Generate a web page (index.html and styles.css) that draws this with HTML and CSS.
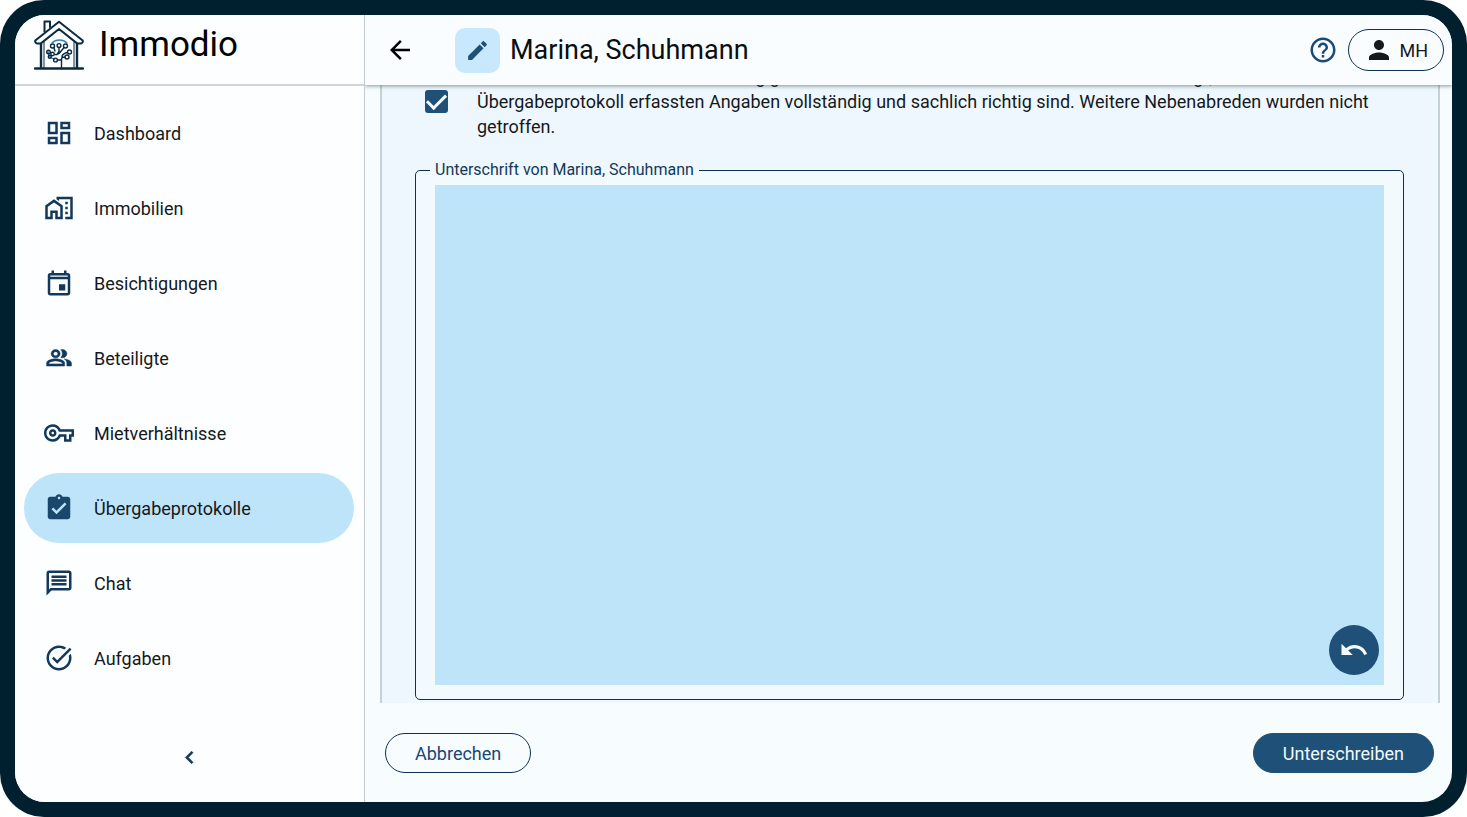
FILE: index.html
```html
<!DOCTYPE html>
<html lang="de">
<head>
<meta charset="utf-8">
<meta name="viewport" content="width=device-width, initial-scale=1">
<title>Immodio – Übergabeprotokolle</title>
<link rel="stylesheet" href="styles.css">
</head>
<body>
<div class="frame">
  <div class="app">
    <aside class="sidebar">
      <div class="brand">
        <svg class="logo" viewBox="0 0 50 50" fill="none" stroke="#0b2a40" stroke-width="2" stroke-linejoin="round" stroke-linecap="round" aria-hidden="true">
          <path d="M10.500 11.500V1.500h5.500v5.500" />
          <path d="M25 1.800 1.600 20.200c-1 1-.2 3 1.400 3.200l3.600.2L25 9l18.400 14.600 3.600-.2c1.600-.2 2.400-2.200 1.400-3.200z"/>
          <path d="M7 24v24M43 24v24M1 48.500h48" stroke-width="2.400"/>
          <path d="M10 22v26M40 22v26" stroke-width="1"/>
          <g stroke-width="1.400">
            <path d="M18 23c4-4 11-4 15 0" stroke="#3f80b0"/>
            <path d="M14 31c0 5 3 8 7 8" stroke="#3f80b0"/>
            <circle cx="18.500" cy="26" r="2"/><circle cx="25" cy="25.500" r="1.900"/><circle cx="31.500" cy="26" r="2"/>
            <circle cx="14.500" cy="32" r="1.800"/><circle cx="18.500" cy="34" r="1.700"/><circle cx="15.800" cy="36.800" r="1.500"/>
            <circle cx="35.500" cy="32" r="2"/><circle cx="33" cy="37" r="2"/><circle cx="21.500" cy="40" r="1.900"/>
            <path d="M27.500 48v-9c0-2 2-2 3.800-2M28 37c0-3 3-4 5.500-4.500M23.500 40h4M25 27.500v4l-2 3M30 27.500l-4 5c-1 2-3 2-5 2M20 28l1 3"/>
          </g>
        </svg>
        <span class="brand-name">Immodio</span>
      </div>
      <nav class="nav" aria-label="Hauptnavigation">
        <a class="nav-item" href="#dashboard"><svg class="icon" viewBox="0 0 24 24"><path d="M19 5v2h-4V5h4M9 5v6H5V5h4m10 8v6h-4v-6h4M9 17v2H5v-2h4M21 3h-8v6h8V3zM11 3H3v10h8V3zm10 8h-8v10h8V11zm-10 4H3v6h8v-6z"/></svg>Dashboard</a>
        <a class="nav-item" href="#immobilien"><svg class="icon" viewBox="0 0 24 24"><path d="M17 11h2v2h-2zM17 7h2v2h-2zM17 15h2v2h-2zM10 3v1.970l2 1.430V5h9v14h-4v2h6V3H10zM8 5 1 10v11h6v-5h2v5h6V10L8 5zm5 14h-2v-5H5v5H3v-8l5-3.500 5 3.500v8z"/></svg>Immobilien</a>
        <a class="nav-item" href="#besichtigungen"><svg class="icon" viewBox="0 0 24 24"><path d="M19 4h-1V2h-2v2H8V2H6v2H5c-1.110 0-1.990.9-1.990 2L3 20c0 1.100.89 2 2 2h14c1.100 0 2-.9 2-2V6c0-1.100-.9-2-2-2zm0 16H5V9h14v11zm0-13H5V6h14v1zm-7 6h5v5h-5z"/></svg>Besichtigungen</a>
        <a class="nav-item" href="#beteiligte"><svg class="icon" viewBox="0 0 24 24"><path stroke="currentColor" stroke-width=".5" d="M16.670 13.130C18.040 14.060 19 15.320 19 17v3h4v-3c0-2.180-3.570-3.470-6.330-3.870zM15 12c2.210 0 4-1.790 4-4s-1.790-4-4-4c-.47 0-.91.1-1.330.24C14.500 5.270 15 6.580 15 8s-.5 2.730-1.330 3.760c.42.14.86.24 1.330.24zM9 12c2.210 0 4-1.790 4-4s-1.790-4-4-4-4 1.790-4 4 1.790 4 4 4zm0-6c1.100 0 2 .9 2 2s-.9 2-2 2-2-.9-2-2 .9-2 2-2zM9 13c-2.670 0-8 1.340-8 4v3h16v-3c0-2.660-5.330-4-8-4zm6 5H3v-.99C3.200 16.290 6.300 15 9 15s5.800 1.290 6 2v1z" transform="translate(1.200 2) scale(.9 .82)"/></svg>Beteiligte</a>
        <a class="nav-item" href="#mietverhaeltnisse"><svg class="icon" viewBox="0 0 24 24"><path d="M22 19h-6v-4h-2.680c-1.140 2.420-3.600 4-6.320 4-3.860 0-7-3.140-7-7s3.140-7 7-7c2.720 0 5.170 1.580 6.320 4H24v6h-2v4zm-4-2h2v-4h2v-2H11.940l-.23-.67C11.010 8.340 9.110 7 7 7c-2.760 0-5 2.240-5 5s2.240 5 5 5c2.110 0 4.010-1.340 4.710-3.330l.23-.67H18v4zM7 15c-1.650 0-3-1.350-3-3s1.350-3 3-3 3 1.350 3 3-1.350 3-3 3zm0-4c-.55 0-1 .45-1 1s.45 1 1 1 1-.45 1-1-.45-1-1-1z"/></svg>Mietverhältnisse</a>
        <a class="nav-item active" href="#uebergabeprotokolle" aria-current="page"><svg class="icon" viewBox="0 0 24 24"><path d="M19 3h-4.180C14.400 1.840 13.300 1 12 1s-2.400.84-2.820 2H5c-1.100 0-2 .9-2 2v14c0 1.100.9 2 2 2h14c1.100 0 2-.9 2-2V5c0-1.100-.9-2-2-2zm-7 0c.55 0 1 .45 1 1s-.45 1-1 1-1-.45-1-1 .45-1 1-1zm-2 14-4-4 1.410-1.410L10 14.170l6.590-6.590L18 9l-8 8z"/></svg>Übergabeprotokolle</a>
        <a class="nav-item" href="#chat"><svg class="icon" viewBox="0 0 24 24"><path d="M4 4h16v12H5.170L4 17.170V4m0-2c-1.100 0-1.990.9-1.990 2L2 22l4-4h14c1.100 0 2-.9 2-2V4c0-1.100-.9-2-2-2H4zm2 10h12v2H6v-2zm0-3h12v2H6V9zm0-3h12v2H6V6z"/></svg>Chat</a>
        <a class="nav-item" href="#aufgaben"><svg class="icon" viewBox="0 0 24 24"><path d="M22 5.180 10.590 16.600l-4.240-4.240 1.410-1.410 2.830 2.830 10-10L22 5.180zm-2.210 5.040c.13.570.21 1.170.21 1.780 0 4.420-3.580 8-8 8s-8-3.580-8-8 3.580-8 8-8c1.580 0 3.040.46 4.280 1.250l1.440-1.440C16.100 2.670 14.130 2 12 2 6.480 2 2 6.480 2 12s4.480 10 10 10 10-4.480 10-10c0-1.190-.22-2.330-.6-3.390l-1.610 1.610z"/></svg>Aufgaben</a>
      </nav>
      <button class="collapse" type="button" aria-label="Navigation einklappen"><svg class="icon-small" viewBox="0 0 24 24"><path stroke="currentColor" stroke-width=".6" d="M15.410 7.410 14 6l-6 6 6 6 1.410-1.410L10.830 12z"/></svg></button>
    </aside>

    <main class="main">
      <header class="topbar">
        <button class="back" type="button" aria-label="Zurück"><svg class="icon" viewBox="0 0 24 24"><path d="M20 11H7.830l5.590-5.590L12 4l-8 8 8 8 1.410-1.410L7.830 13H20v-2z"/></svg></button>
        <span class="badge"><svg class="icon-small" viewBox="0 0 24 24"><path d="M3 17.250V21h3.750L17.810 9.940l-3.750-3.750L3 17.250zM20.710 7.040c.39-.39.39-1.020 0-1.410l-2.340-2.340c-.39-.39-1.020-.39-1.410 0l-1.830 1.830 3.750 3.750 1.830-1.830z"/></svg></span>
        <h1 class="title">Marina, Schuhmann</h1>
        <button class="help" type="button" aria-label="Hilfe"><svg class="icon" viewBox="0 0 24 24"><path d="M11 18h2v-2h-2v2zm1-16C6.480 2 2 6.480 2 12s4.480 10 10 10 10-4.480 10-10S17.520 2 12 2zm0 18c-4.410 0-8-3.590-8-8s3.590-8 8-8 8 3.590 8 8-3.590 8-8 8zm0-14c-2.210 0-4 1.790-4 4h2c0-1.100.9-2 2-2s2 .9 2 2c0 2-3 1.750-3 5h2c0-2.250 3-2.500 3-5 0-2.210-1.790-4-4-4z"/></svg></button>
        <button class="account" type="button"><svg class="icon" viewBox="0 0 24 24"><path d="M12 12c2.210 0 4-1.790 4-4s-1.790-4-4-4-4 1.790-4 4 1.790 4 4 4zm0 2c-2.670 0-8 1.340-8 4v2h16v-2c0-2.660-5.330-4-8-4z"/></svg>MH</button>
      </header>

      <div class="scroller">
        <section class="panel">
          <div class="consent">
            <input class="check" type="checkbox" id="consent" checked>
            <label for="consent">Durch unsere Unterschrift unabhängig voneinander wird durch beide Seiten hiermit bestätigt, dass die im Übergabeprotokoll erfassten Angaben vollständig und sachlich richtig sind. Weitere Nebenabreden wurden nicht getroffen.</label>
          </div>
          <fieldset class="signature">
            <legend>Unterschrift von Marina, Schuhmann</legend>
            <div class="pad">
              <button class="undo" type="button" aria-label="Rückgängig"><svg class="icon" viewBox="0 0 24 24"><path d="M12.500 8c-2.650 0-5.050.99-6.900 2.600L2 7v9h9l-3.620-3.620c1.390-1.160 3.160-1.880 5.120-1.880 3.540 0 6.550 2.310 7.600 5.500l2.370-.78C21.080 11.030 17.150 8 12.500 8z"/></svg></button>
            </div>
          </fieldset>
        </section>
      </div>

      <footer class="actions">
        <button class="btn outline" type="button">Abbrechen</button>
        <button class="btn filled" type="button">Unterschreiben</button>
      </footer>
    </main>
  </div>
</div>
</body>
</html>
```
FILE: styles.css
```css
:root {
  --navy: #12395b;
  --blue: #1f5078;
  --line: #102f52;
  --sky: #bee4fa;
  --ink: #15191c;
}
* { box-sizing: border-box; }
body {
  margin: 0;
  background: #fff;
  color: var(--ink);
  font-family: Roboto, "Liberation Sans", sans-serif;
  font-size: 18px;
  line-height: 25px;
}
button {
  margin: 0;
  padding: 0;
  border: 0;
  background: none;
  color: inherit;
  font: inherit;
  cursor: pointer;
}
svg { display: block; flex: none; }
.icon { width: 30px; height: 30px; fill: currentColor; }
.icon-small { width: 25px; height: 25px; fill: currentColor; }

.frame {
  display: flex;
  height: 100vh;
  padding: 15px;
  background: #00202f;
  border-radius: 44px;
}
.app {
  display: flex;
  flex: 1;
  min-width: 0;
  overflow: hidden;
  background: #f7fcff;
  border-radius: 30px;
}

.sidebar {
  display: flex;
  flex-direction: column;
  flex: none;
  width: 350px;
  background: #fcfeff;
  border-right: 1px solid #c3c9cd;
}
.brand {
  display: flex;
  align-items: center;
  gap: 15px;
  height: 71px;
  padding: 0 19px 9px;
  border-bottom: 2px solid #cfd5da;
}
.logo { width: 50px; height: 50px; }
.brand-name { color: #000; font-size: 35px; line-height: 40px; }
.nav {
  display: flex;
  flex-direction: column;
  gap: 5px;
  padding: 12px 10px 0 9px;
}
.nav-item {
  display: flex;
  align-items: center;
  gap: 20px;
  height: 70px;
  padding: 0 20px;
  border-radius: 35px;
  color: var(--ink);
  text-decoration: none;
}
.nav-item .icon { color: var(--navy); }
.nav-item.active { background: var(--sky); }
.nav-item.active .icon { color: #1a486d; }
.collapse {
  align-self: center;
  margin-top: auto;
  padding: 12px;
  margin-bottom: 20px;
  color: var(--navy);
}

.main {
  display: flex;
  flex-direction: column;
  flex: 1;
  min-width: 0;
  overflow: hidden;
}
.topbar {
  display: flex;
  align-items: center;
  flex: none;
  z-index: 1;
  height: 70px;
  padding: 0 8px 0 20px;
  background: #f9fdff;
  box-shadow: 0 1px 4px rgba(20, 50, 50, 0.5);
}
.back { color: #000; }
.badge {
  display: grid;
  place-items: center;
  width: 45px;
  height: 45px;
  margin: 0 10px 0 40px;
  border-radius: 10px;
  background: #c8e9fd;
  color: var(--blue);
}
.title {
  flex: 1;
  margin: 0;
  color: #0b0d0e;
  font-size: 27px;
  font-weight: 400;
  line-height: 35px;
}
.help { margin-right: 10px; color: #1a4b76; }
.account {
  display: flex;
  align-items: center;
  gap: 5px;
  height: 42px;
  padding: 0 15px;
  border: 1px solid var(--line);
  border-radius: 21px;
}

.scroller {
  display: flex;
  flex: 1;
  flex-direction: column;
  justify-content: flex-end;
  min-height: 0;
  overflow: hidden;
  padding: 0 12px 0 15px;
}
.panel {
  flex: none;
  padding: 0 34px 3px 33px;
  background: #eff7fe;
  border: solid #c3d2d4;
  border-width: 0 2px;
}
.consent {
  display: flex;
  align-items: center;
  gap: 29px;
  padding: 0 20px 0 10px;
  margin-bottom: 21px;
}
.check {
  display: grid;
  flex: none;
  place-items: center;
  width: 23px;
  height: 23px;
  margin: 0;
  appearance: none;
  border: 2px solid var(--blue);
  border-radius: 3px;
}
.check:checked { background: var(--blue); }
.check:checked::before {
  content: "";
  width: 16px;
  height: 8px;
  margin-bottom: 5px;
  border: solid #f5fbff;
  border-width: 0 0 3px 3px;
  transform: rotate(-45deg);
}
.signature {
  min-width: 0;
  margin: 0;
  padding: 5px 14px 14px;
  border: 1px solid var(--line);
  border-radius: 5px;
  background: #f2fafe;
}
.signature legend {
  padding: 0 5px;
  color: var(--navy);
  font-size: 16px;
  line-height: 20px;
}
.pad {
  display: flex;
  align-items: flex-end;
  justify-content: flex-end;
  height: 500px;
  margin: 0 5px;
  padding: 10px 5px;
  background: var(--sky);
}
.undo {
  display: grid;
  place-items: center;
  width: 50px;
  height: 50px;
  border-radius: 50%;
  background: var(--blue);
  color: #f5fbff;
}

.actions {
  display: flex;
  flex: none;
  justify-content: space-between;
  padding: 30px 18px 29px 20px;
}
.btn {
  height: 40px;
  padding: 0 29px;
  border: 1px solid var(--line);
  border-radius: 20px;
}
.outline { color: #1c4675; }
.filled { border-color: var(--blue); background: var(--blue); color: #f1faff; }
```
